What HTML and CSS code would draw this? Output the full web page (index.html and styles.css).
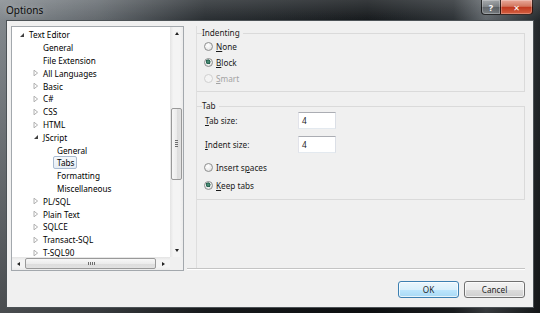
FILE: index.html
```html
<!DOCTYPE html>
<html>

<head>
    <meta charset="utf-8">
    <title>Options</title>
    <link rel="stylesheet" href="styles.css">
</head>

<body>
    <div class="window">
        <div class="titlebar">
            <span class="title">Options</span>
            <div class="caption">
                <span class="cbtn help">?</span>
                <span class="cbtn close">&#x2715;</span>
            </div>
        </div>

        <div class="client">
            <div class="main">
                <div class="tree">
                    <div class="tree-body">
                        <ul class="nodes">
                            <li class="node l0"><span class="exp open"></span><span class="label">Text Editor</span></li>
                            <li class="node l1"><span class="exp"></span><span class="label">General</span></li>
                            <li class="node l1"><span class="exp"></span><span class="label">File Extension</span></li>
                            <li class="node l1"><span class="exp"><svg class="arr" viewBox="0 0 6 8"><path d="M1 1.2 L4.6 4 L1 6.8Z" /></svg></span><span class="label">All Languages</span></li>
                            <li class="node l1"><span class="exp"><svg class="arr" viewBox="0 0 6 8"><path d="M1 1.2 L4.6 4 L1 6.8Z" /></svg></span><span class="label">Basic</span></li>
                            <li class="node l1"><span class="exp"><svg class="arr" viewBox="0 0 6 8"><path d="M1 1.2 L4.6 4 L1 6.8Z" /></svg></span><span class="label">C#</span></li>
                            <li class="node l1"><span class="exp"><svg class="arr" viewBox="0 0 6 8"><path d="M1 1.2 L4.6 4 L1 6.8Z" /></svg></span><span class="label">CSS</span></li>
                            <li class="node l1"><span class="exp"><svg class="arr" viewBox="0 0 6 8"><path d="M1 1.2 L4.6 4 L1 6.8Z" /></svg></span><span class="label">HTML</span></li>
                            <li class="node l1"><span class="exp open"></span><span class="label">JScript</span></li>
                            <li class="node l2"><span class="exp"></span><span class="label">General</span></li>
                            <li class="node l2"><span class="exp"></span><span class="label sel">Tabs</span></li>
                            <li class="node l2"><span class="exp"></span><span class="label">Formatting</span></li>
                            <li class="node l2"><span class="exp"></span><span class="label">Miscellaneous</span></li>
                            <li class="node l1"><span class="exp"><svg class="arr" viewBox="0 0 6 8"><path d="M1 1.2 L4.6 4 L1 6.8Z" /></svg></span><span class="label">PL/SQL</span></li>
                            <li class="node l1"><span class="exp"><svg class="arr" viewBox="0 0 6 8"><path d="M1 1.2 L4.6 4 L1 6.8Z" /></svg></span><span class="label">Plain Text</span></li>
                            <li class="node l1"><span class="exp"><svg class="arr" viewBox="0 0 6 8"><path d="M1 1.2 L4.6 4 L1 6.8Z" /></svg></span><span class="label">SQLCE</span></li>
                            <li class="node l1"><span class="exp"><svg class="arr" viewBox="0 0 6 8"><path d="M1 1.2 L4.6 4 L1 6.8Z" /></svg></span><span class="label">Transact-SQL</span></li>
                            <li class="node l1"><span class="exp"><svg class="arr" viewBox="0 0 6 8"><path d="M1 1.2 L4.6 4 L1 6.8Z" /></svg></span><span class="label">T-SQL90</span></li>
                        </ul>
                        <div class="vscroll">
                            <span class="sbtn"><i class="tri up"></i></span>
                            <div class="vtrack"><div class="thumb vthumb"></div></div>
                            <span class="sbtn"><i class="tri down"></i></span>
                        </div>
                    </div>
                    <div class="hscroll">
                        <span class="sbtn"><i class="tri left"></i></span>
                        <div class="thumb hthumb"></div>
                        <span class="sbtn"><i class="tri right"></i></span>
                        <span class="corner"></span>
                    </div>
                </div>

                <div class="panel">
                    <div class="pane">
                        <fieldset class="group">
                            <legend>Indenting</legend>
                            <div class="opt"><span class="radio"></span><span><u>N</u>one</span></div>
                            <div class="opt"><span class="radio on"></span><span><u>B</u>lock</span></div>
                            <div class="opt disabled"><span class="radio"></span><span><u>S</u>mart</span></div>
                        </fieldset>

                        <fieldset class="group tab-group">
                            <legend>Tab</legend>
                            <div class="field"><label><u>T</u>ab size:</label><span class="textbox">4</span></div>
                            <div class="field"><label><u>I</u>ndent size:</label><span class="textbox">4</span></div>
                            <div class="opt tall first"><span class="radio"></span><span>Insert s<u>p</u>aces</span></div>
                            <div class="opt tall"><span class="radio on"></span><span><u>K</u>eep tabs</span></div>
                        </fieldset>
                    </div>
                </div>
            </div>

            <div class="buttons">
                <button class="default">OK</button>
                <button>Cancel</button>
            </div>
        </div>
    </div>
</body>

</html>
```

FILE: styles.css
```css
* {
    box-sizing: border-box;
}

html,
body {
    margin: 0;
}

body {
    width: 540px;
    height: 313px;
    overflow: hidden;
    font-family: "Noto Sans", "DejaVu Sans", sans-serif;
    font-size: 8.2px;
    color: #1a1a1a;
    background: #22272b;
}

.window {
    height: 313px;
    display: flex;
    flex-direction: column;
    padding: 0 7px 6px;
    background:
        linear-gradient(to bottom, rgba(0, 0, 0, 0) 0, rgba(0, 0, 0, 0.45) 100%),
        linear-gradient(to right, #868c91 0%, #656b70 18%, #2a2f33 38%, #161a1d 68%, #2d3236 84%, #62686d 90%, #23282b 100%);
}

/* title bar */

.titlebar {
    height: 21px;
    margin: 0 -7px;
    padding: 0 7px 0 6px;
    display: flex;
    align-items: flex-start;
    background: linear-gradient(to bottom, rgba(255, 255, 255, 0.14), rgba(255, 255, 255, 0));
}

.title {
    font-size: 10px;
    line-height: 20px;
    color: #0c0c0c;
    text-shadow: 0 0 6px rgba(255, 255, 255, 0.45);
}

.caption {
    margin-left: auto;
    display: flex;
}

.cbtn {
    height: 15px;
    display: flex;
    align-items: center;
    justify-content: center;
    color: #fff;
    font-weight: bold;
    border: 1px solid rgba(0, 0, 0, 0.75);
    border-top: none;
    box-shadow: inset 0 0 0 1px rgba(255, 255, 255, 0.25);
}

.help {
    width: 19px;
    font-size: 9px;
    border-right: none;
    border-radius: 0 0 0 4px;
    background: linear-gradient(to bottom, rgba(255, 255, 255, 0.35), rgba(255, 255, 255, 0.12) 50%, rgba(0, 0, 0, 0.1) 51%, rgba(255, 255, 255, 0.15));
}

.close {
    width: 33px;
    font-size: 8px;
    border-radius: 0 0 4px 0;
    background: linear-gradient(to bottom, #e9a99a 0, #d2765e 45%, #c0391f 52%, #d55f40 100%);
}

/* client */

.client {
    flex: 1;
    background: #f0f0f0;
    padding: 5px 8px 0 4px;
    box-shadow: 0 0 0 1px #4c5256;
}

.main {
    height: 245px;
    display: flex;
}

/* tree view */

.tree {
    width: 173px;
    border: 1px solid #a3a8ad;
    background: #fff;
    display: flex;
    flex-direction: column;
}

.tree-body {
    flex: 1;
    min-height: 0;
    display: flex;
}

.nodes {
    flex: 1;
    list-style: none;
    margin: 0;
    padding: 1.6px 0 0;
    overflow: hidden;
}

.node {
    height: 12.8px;
    display: flex;
    align-items: center;
    color: #000;
    white-space: nowrap;
}

.l0 {
    padding-left: 5px;
}

.l1 {
    padding-left: 19px;
}

.l2 {
    padding-left: 33px;
}

.exp {
    width: 12px;
    flex: none;
    display: flex;
    align-items: center;
}

.exp.open::before {
    content: "";
    margin-left: 3px;
    border-style: solid;
    border-width: 0 0 4px 4px;
    border-color: transparent transparent #3f3f3f transparent;
}

.arr {
    width: 6px;
    height: 8px;
    margin-left: 2px;
}

.arr path {
    fill: #fff;
    stroke: #a7a7a7;
    stroke-width: 0.9;
}

.label {
    line-height: 11px;
}

.label.sel {
    margin-left: -4px;
    padding: 0 2px 0 3px;
    border: 1px solid #a9bbd0;
    border-radius: 2px;
    background: linear-gradient(to bottom, #f6f9fc, #e6edf5);
}

/* scroll bars */

.vscroll {
    width: 13px;
    flex: none;
    display: flex;
    flex-direction: column;
    background: linear-gradient(to right, #e4e4e4 0, #f4f4f4 25%, #f4f4f4 75%, #ebebeb 100%);
}

.sbtn {
    width: 13px;
    height: 13px;
    flex: none;
    display: flex;
    align-items: center;
    justify-content: center;
}

.vtrack {
    flex: 1;
    padding-top: 68px;
}

.thumb {
    border: 1px solid #999;
    border-radius: 2px;
    position: relative;
}

.vthumb {
    height: 72px;
    margin: 0 1px;
    background: linear-gradient(to right, #f7f7f7, #ececec 50%, #dcdcdc 51%, #e2e2e2);
}

.vthumb::after {
    content: "";
    position: absolute;
    left: 3px;
    right: 3px;
    top: 31px;
    height: 7px;
    background: repeating-linear-gradient(to bottom, #6d6d6d 0, #6d6d6d 1px, transparent 1px, transparent 2px);
}

.hscroll {
    height: 13px;
    flex: none;
    display: flex;
    background: linear-gradient(to bottom, #e4e4e4 0, #f4f4f4 25%, #f4f4f4 75%, #ebebeb 100%);
}

.hthumb {
    flex: 1;
    margin: 1px 1px 1px 0;
    background: linear-gradient(to bottom, #f7f7f7, #ececec 50%, #dcdcdc 51%, #e2e2e2);
}

.hthumb::after {
    content: "";
    position: absolute;
    top: 3px;
    bottom: 3px;
    left: 62px;
    width: 7px;
    background: repeating-linear-gradient(to right, #6d6d6d 0, #6d6d6d 1px, transparent 1px, transparent 2px);
}

.corner {
    width: 13px;
    background: #f0f0f0;
}

.tri {
    width: 0;
    height: 0;
    border-style: solid;
}

.tri.up {
    border-width: 0 2.5px 3px;
    border-color: transparent transparent #222 transparent;
}

.tri.down {
    border-width: 3px 2.5px 0;
    border-color: #222 transparent transparent transparent;
}

.tri.left {
    border-width: 2.5px 3px 2.5px 0;
    border-color: transparent #222 transparent transparent;
}

.tri.right {
    border-width: 2.5px 0 2.5px 3px;
    border-color: transparent transparent transparent #222;
}

/* option pane */

.panel {
    width: 338px;
    height: 243px;
    margin-left: 3px;
    border-bottom: 1px solid #c4c4c4;
    box-shadow: 0 1px 0 #fff;
}

.pane {
    height: 100%;
    margin-left: 9px;
    padding-top: 2px;
    border-left: 1px solid #dedede;
}

.group {
    margin: 0;
    padding: 0 0 5px 7px;
    border: 1px solid #dadada;
    border-left: none;
}

.group legend {
    margin-left: -2px;
    padding: 0 3px 0 0;
    line-height: 10px;
}

.tab-group {
    margin-top: 9px;
    padding-top: 1px;
}

.opt {
    height: 16px;
    display: flex;
    align-items: center;
}

.opt.tall {
    height: 18px;
}

.opt.first {
    margin-top: 5px;
}

.opt.disabled {
    color: #a3a3a3;
}

.radio {
    width: 9px;
    height: 9px;
    margin-right: 3px;
    border: 1px solid #8e8f8f;
    border-radius: 50%;
    background: radial-gradient(circle at 40% 35%, #ffffff 0, #f0f0f0 45%, #d6d6d6 100%);
}

.opt.disabled .radio {
    border-color: #d0d0d0;
    background: #f4f4f4;
}

.radio.on {
    background:
        radial-gradient(circle at 45% 40%, #5d9c86 0, #1f5e4a 38%, rgba(31, 94, 74, 0) 45%),
        radial-gradient(circle at 40% 35%, #ffffff 0, #f0f0f0 45%, #d6d6d6 100%);
}

.field {
    height: 17px;
    display: flex;
    align-items: center;
}

.field + .field {
    margin-top: 7px;
}

.field label {
    width: 93px;
    margin-left: 1px;
}

.textbox {
    width: 38px;
    height: 17px;
    padding-left: 3px;
    display: flex;
    align-items: center;
    background: #fff;
    border: 1px solid;
    border-color: #abadb3 #dbdfe6 #e3e9ef #e2e3ea;
}

/* dialog buttons */

.buttons {
    margin-top: 10px;
    display: flex;
    justify-content: flex-end;
    gap: 5px;
}

.buttons button {
    width: 61px;
    height: 17px;
    padding: 0;
    font: inherit;
    color: #1e1e1e;
    border: 1px solid #707070;
    border-radius: 3px;
    background: linear-gradient(to bottom, #f2f2f2 0, #ebebeb 50%, #dddddd 51%, #cfcfcf 100%);
    box-shadow: inset 0 0 0 1px rgba(255, 255, 255, 0.7);
}

.buttons button.default {
    border-color: #3c7fb1;
    background: linear-gradient(to bottom, #eaf6fd 0, #d9f0fc 50%, #bee6fd 51%, #a7d9f5 100%);
}
```
